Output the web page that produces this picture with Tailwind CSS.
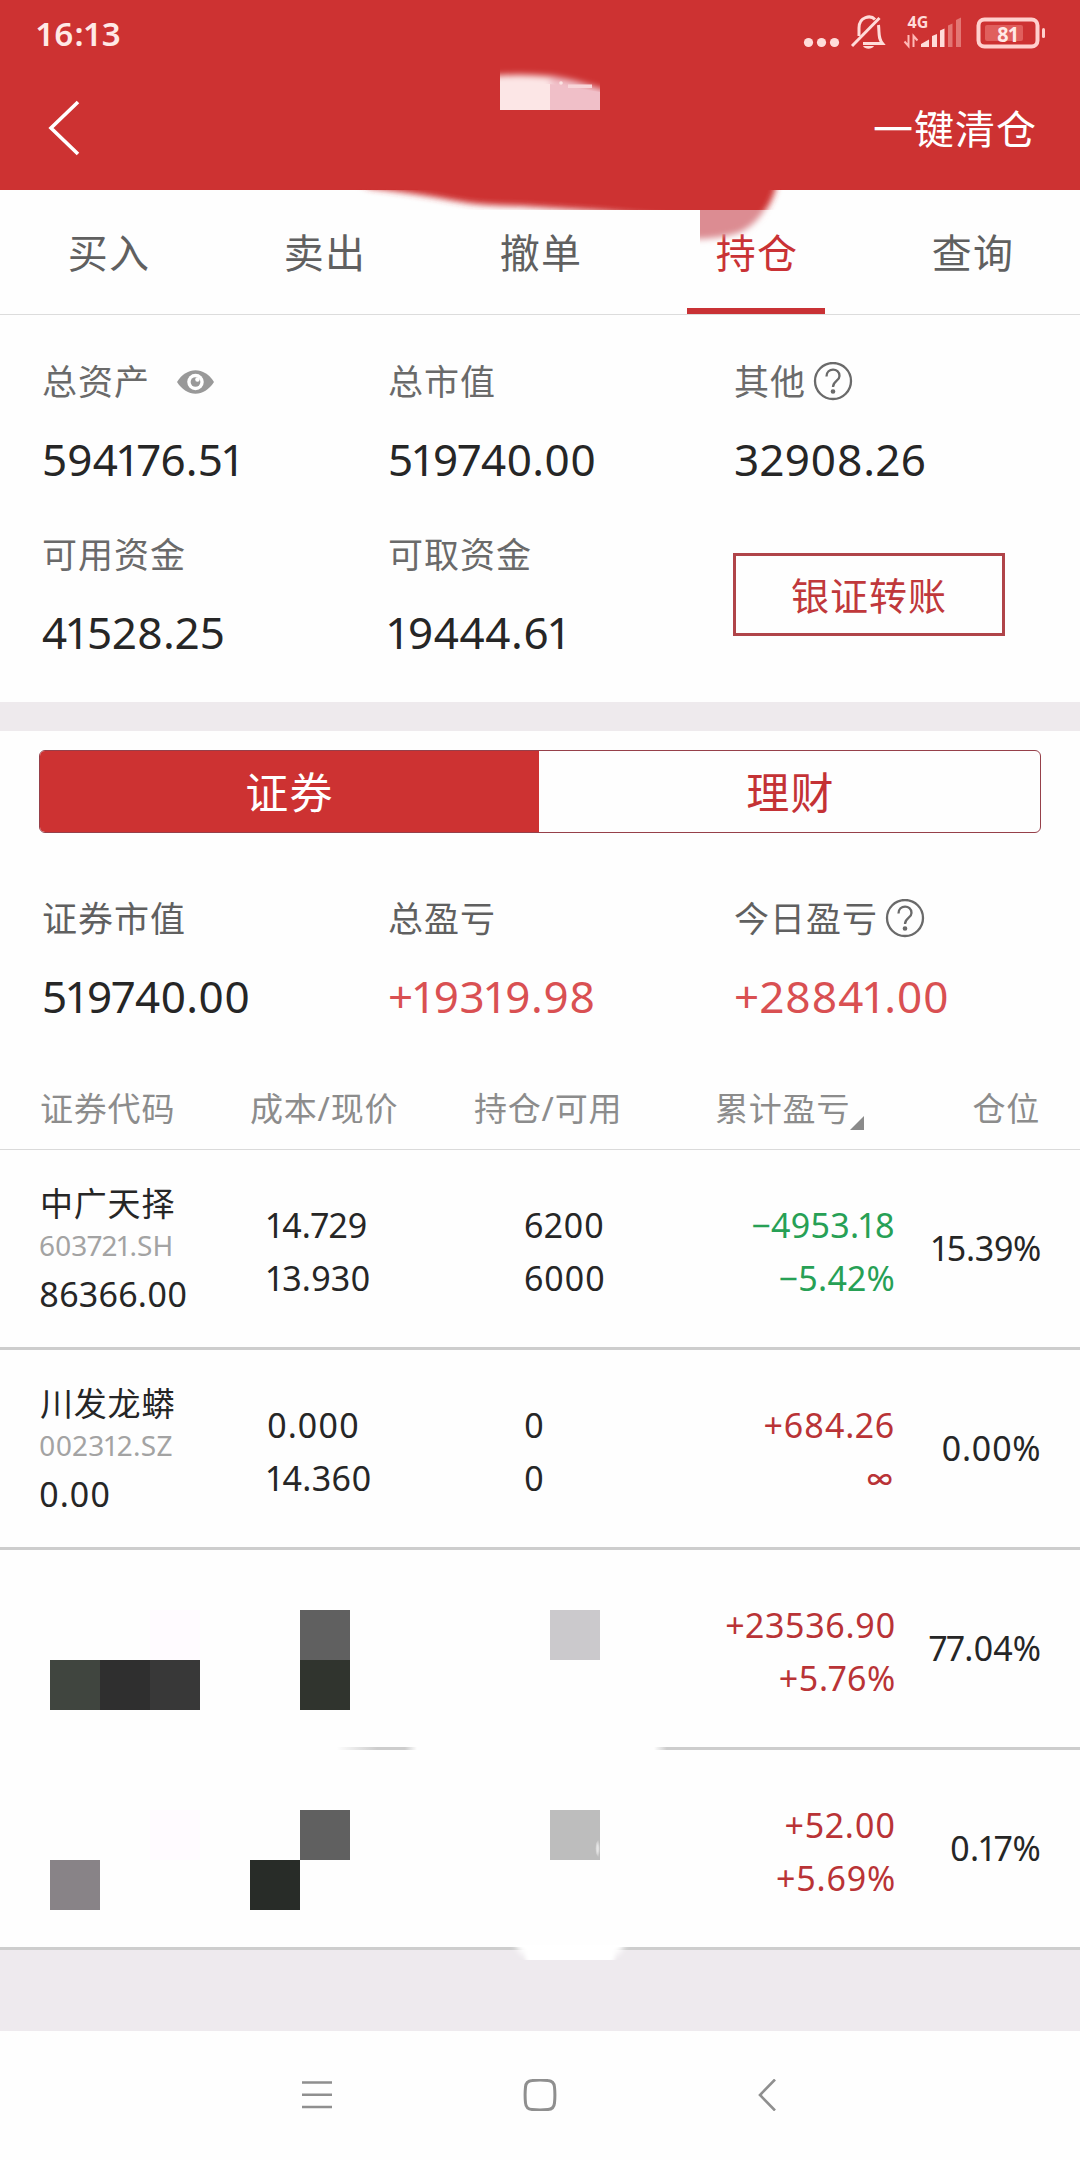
<!DOCTYPE html>
<html lang="zh-CN">
<head>
<meta charset="utf-8">
<title>持仓</title>
<script src="https://cdn.jsdelivr.net/npm/@tailwindcss/browser@4"></script>
</head>
<body class="bg-[#fefefe]">
<div class="relative flex h-[2160px] w-[1080px] flex-col overflow-hidden bg-[#fefefe] font-['Noto_Sans','Noto_Sans_CJK_SC',sans-serif] text-[#262626] proportional-nums">

  <!-- status bar and title bar -->
  <header class="h-[190px] shrink-0 bg-[#cd3232] text-white">
    <div class="flex h-[66px] items-center justify-between pr-[34px] pl-[37px]">
      <div class="pt-px text-[33px] leading-[66px] font-semibold tracking-[1px] text-[#ffe9e6]">16:13</div>
      <svg class="h-[66px] w-[246px]" viewBox="800 0 246 66" fill="none">
        <g fill="#ffdcd9"><circle cx="808.500" cy="42.500" r="4.600"/><circle cx="821.500" cy="42.500" r="4.600"/><circle cx="834.500" cy="42.500" r="4.600"/></g>
        <g stroke="#ffdcd9" stroke-width="3">
          <path d="M852 46 L879.500 18"/>
          <path d="M859 36V28C859 16 871 15 875 19.500"/>
          <path d="M878.500 25C879.500 34 878 38 882.500 43.500H863"/>
        </g>
        <path d="M863 46H874C872 49.500 865 49.500 863 46Z" fill="#ffdcd9"/>
        <text x="907.500" y="28" font-size="16" font-weight="700" fill="#ffdcd9" font-family="Noto Sans">4G</text>
        <g stroke="#ffb9b6" stroke-width="2"><path d="M908.500 35V46L904.500 41.500M913.500 47V36L917.500 40.500"/></g>
        <path d="M921 47V44L929 39.500V47Z M932 47V36L937 34V47Z M940 47V30.500L944.500 28.500V47Z" fill="#ffdcd9"/>
        <path d="M948 47V25.500L952.500 23.500V47Z M956 47V20L961 17.500V47Z" fill="#e37673"/>
        <rect x="978.500" y="19.500" width="59" height="27" rx="6" stroke="#ffd0cd" stroke-width="4"/>
        <rect x="1042" y="28" width="3" height="10" rx="1.500" fill="#ffd0cd"/>
        <rect x="985" y="25" width="38" height="16" rx="2" fill="#e05f5d"/>
        <text x="1008" y="41.500" text-anchor="middle" font-size="22" font-weight="700" textLength="22" lengthAdjust="spacingAndGlyphs" fill="#ffe9e6" font-family="Noto Sans">81</text>
      </svg>
    </div>
    <div class="flex h-[124px] items-center justify-between pr-[43px] pl-[47px]">
      <svg class="h-[56px] w-[34px]" viewBox="0 0 34 56" fill="none" stroke="#fff" stroke-width="3.600"><path d="M31 2 L4 28 L31 54"/></svg>
      <div class="pt-[2px] text-[40px] leading-[60px] tracking-[1px]">一键清仓</div>
    </div>
  </header>

  <!-- tabs -->
  <nav class="grid h-[125px] shrink-0 grid-cols-5 border-b border-[#dcdcdc] text-center text-[40px] leading-[126px] tracking-[1.2px] text-[#606060]">
    <div class="pl-[2px]">买入</div>
    <div class="pl-[2px]">卖出</div>
    <div class="pl-[2px]">撤单</div>
    <div class="flex flex-col items-center text-[#c93235]"><span class="h-[118px] pl-[2px]">持仓</span><span class="h-[6px] w-[138px] bg-[#c93235]"></span></div>
    <div class="pl-[2px]">查询</div>
  </nav>

  <!-- account summary -->
  <section class="grid shrink-0 grid-cols-[346px_346px_1fr] gap-y-[44px] pt-[43px] pb-[42px] pl-[42px]">
    <div>
      <div class="flex h-12 items-center text-[35px] leading-[48px] tracking-[1px] text-[#6a6a6a]">总资产
        <svg class="ml-[27px] h-[24px] w-[37px]" viewBox="0 0 38 24"><path d="M0 12C10-4 28-4 38 12C28 28 10 28 0 12Z" fill="#999"/><circle cx="19" cy="12" r="8.500" fill="#fff"/><circle cx="19" cy="12" r="5" fill="#999"/><circle cx="21" cy="9.500" r="2.300" fill="#fff"/></svg>
      </div>
      <div class="mt-[25px] h-14 text-[44px] leading-[56px] tracking-[0.2px]">594176.51</div>
    </div>
    <div>
      <div class="h-12 text-[35px] leading-[48px] tracking-[1px] text-[#6a6a6a]">总市值</div>
      <div class="mt-[25px] h-14 text-[44px] leading-[56px] tracking-[0.2px]">519740.00</div>
    </div>
    <div>
      <div class="flex h-12 items-center text-[35px] leading-[48px] tracking-[1px] text-[#6a6a6a]">其他
        <svg class="ml-[7px] h-[40px] w-[40px]" viewBox="0 0 40 40" fill="none" stroke="#6a6a6a" stroke-width="2.300"><circle cx="20" cy="19" r="18"/><path d="M13.500 14.500C13.500 5.500 26.500 5.500 26.500 14C26.500 19 20 19 20 25"/><circle cx="20" cy="29.500" r="1.200" fill="#6a6a6a"/></svg>
      </div>
      <div class="mt-[25px] h-14 text-[44px] leading-[56px] tracking-[0.6px]">32908.26</div>
    </div>
    <div>
      <div class="h-12 text-[35px] leading-[48px] tracking-[1px] text-[#6a6a6a]">可用资金</div>
      <div class="mt-[25px] h-14 text-[44px] leading-[56px] tracking-[0.2px]">41528.25</div>
    </div>
    <div>
      <div class="h-12 text-[35px] leading-[48px] tracking-[1px] text-[#6a6a6a]">可取资金</div>
      <div class="mt-[25px] h-14 text-[44px] leading-[56px] tracking-[0.6px]">19444.61</div>
    </div>
    <div class="mt-[22px] ml-[-1px] h-[83px] w-[272px] border-[3px] border-[#b04449] text-center text-[38px] leading-[78px] tracking-[1px] text-[#c0383b]">银证转账</div>
  </section>

  <div class="h-[29px] shrink-0 bg-[#eeeaed]"></div>

  <!-- segmented control -->
  <div class="mx-[39px] mt-[19px] flex h-[83px] shrink-0 overflow-hidden rounded-[6px] border border-[#96404a] text-center text-[43px] leading-[83px] tracking-[1.2px]">
    <div class="flex-1 bg-[#cd3232] text-white">证券</div>
    <div class="flex-1 pl-[2px] text-[#c43235]">理财</div>
  </div>

  <!-- securities summary -->
  <section class="mt-[62px] grid h-[129px] shrink-0 grid-cols-[346px_346px_1fr] pl-[42px]">
    <div>
      <div class="h-12 text-[35px] leading-[48px] tracking-[1px] text-[#606060]">证券市值</div>
      <div class="mt-[25px] h-14 text-[44px] leading-[56px] tracking-[0.2px]">519740.00</div>
    </div>
    <div>
      <div class="h-12 text-[35px] leading-[48px] tracking-[1px] text-[#606060]">总盈亏</div>
      <div class="mt-[25px] h-14 text-[44px] leading-[56px] tracking-[0.6px] text-[#d95052]">+19319.98</div>
    </div>
    <div>
      <div class="flex h-12 items-center text-[35px] leading-[48px] tracking-[1px] text-[#606060]">今日盈亏
        <svg class="ml-[7px] h-[40px] w-[40px]" viewBox="0 0 40 40" fill="none" stroke="#6a6a6a" stroke-width="2.300"><circle cx="20" cy="19" r="18"/><path d="M13.500 14.500C13.500 5.500 26.500 5.500 26.500 14C26.500 19 20 19 20 25"/><circle cx="20" cy="29.500" r="1.200" fill="#6a6a6a"/></svg>
      </div>
      <div class="mt-[25px] h-14 text-[44px] leading-[56px] tracking-[0.7px] text-[#d95052]">+28841.00</div>
    </div>
  </section>

  <!-- holdings table -->
  <div class="mt-[42px] grid h-[84px] shrink-0 grid-cols-[210px_224px_241px_1fr_auto] border-b border-[#dadada] pr-[40px] pl-[40px] text-[33px] leading-[85px] tracking-[0.8px] text-[#8c8c8c]">
    <div>证券代码</div>
    <div>成本/现价</div>
    <div>持仓/可用</div>
    <div class="flex">累计盈亏<svg class="mt-[50px] h-[14px] w-[14px]" viewBox="0 0 14 14"><path d="M14 0V14H0Z" fill="#8a8a8a"/></svg></div>
    <div>仓位</div>
  </div>

  <div class="grid h-[200px] shrink-0 grid-cols-[228px_257px_169px_202px_1fr] border-b-[3px] border-[#cdcdcd] pr-[39px] pl-[39px] text-[34px]">
    <div class="pt-[34px]">
      <div class="h-10 pl-px text-[33px] leading-10 tracking-[0.8px]">中广天择</div>
      <div class="mt-[3px] h-9 text-[28px] leading-9 text-[#a3a3a3]">603721.SH</div>
      <div class="mt-[11px] leading-10 tracking-[0.2px]">86366.00</div>
    </div>
    <div class="pt-[49px] leading-[53px] tracking-[0.2px]"><div>14.729</div><div>13.930</div></div>
    <div class="pt-[49px] leading-[53px] tracking-[0.6px]"><div>6200</div><div>6000</div></div>
    <div class="pt-[49px] text-right leading-[53px] tracking-[0.3px] text-[#27a055]"><div>−4953.18</div><div>−5.42%</div></div>
    <div class="pt-[72px] text-right leading-[53px]"><div class="tracking-[-0.3px]">15.39%</div></div>
  </div>

  <div class="grid h-[200px] shrink-0 grid-cols-[228px_257px_169px_202px_1fr] border-b-[3px] border-[#cdcdcd] pr-[39px] pl-[39px] text-[34px]">
    <div class="pt-[34px]">
      <div class="h-10 pl-px text-[33px] leading-10 tracking-[0.8px]">川发龙蟒</div>
      <div class="mt-[3px] h-9 text-[28px] leading-9 tracking-[0.3px] text-[#a3a3a3]">002312.SZ</div>
      <div class="mt-[11px] leading-10 tracking-[0.8px]">0.00</div>
    </div>
    <div class="pt-[49px] leading-[53px] tracking-[0.4px]"><div class="tracking-[0.8px]">0.000</div><div>14.360</div></div>
    <div class="pt-[49px] leading-[53px]"><div>0</div><div>0</div></div>
    <div class="pt-[49px] text-right leading-[53px] tracking-[0.8px] text-[#b93336]"><div>+684.26</div><div class="pr-[2px] text-[25px] leading-[54px] font-semibold">∞</div></div>
    <div class="pt-[72px] text-right leading-[53px] tracking-[0.5px]">0.00%</div>
  </div>

  <div class="relative grid h-[200px] shrink-0 grid-cols-[654px_202px_1fr] pr-[39px] pl-[40px] text-[34px]">
    <svg class="absolute top-0 left-0 h-[200px] w-[1080px]" viewBox="0 0 1080 200">
      <defs>
        <linearGradient id="fa"><stop offset="0" stop-color="#cdcdcd" stop-opacity="0"/><stop offset=".5" stop-color="#cdcdcd"/><stop offset=".85" stop-color="#cdcdcd"/><stop offset="1" stop-color="#cdcdcd" stop-opacity="0"/></linearGradient>
        <linearGradient id="fb"><stop offset="0" stop-color="#cdcdcd" stop-opacity="0"/><stop offset=".03" stop-color="#cdcdcd"/></linearGradient>
      </defs>
      <rect x="150" y="60" width="50" height="50" fill="#fffbff"/>
      <rect x="50" y="110" width="50" height="50" fill="#40453f"/>
      <rect x="100" y="110" width="50" height="50" fill="#2f2f2f"/>
      <rect x="150" y="110" width="50" height="50" fill="#383838"/>
      <rect x="300" y="60" width="50" height="50" fill="#606060"/>
      <rect x="300" y="110" width="50" height="50" fill="#30342e"/>
      <rect x="550" y="60" width="50" height="50" fill="#cbc9cc"/>
      <rect x="337" y="197" width="80" height="3" fill="url(#fa)"/>
      <rect x="654" y="197" width="426" height="3" fill="url(#fb)"/>
    </svg>
    <div></div>
    <div class="pt-[49px] text-right leading-[53px] tracking-[0.7px] text-[#b93336]"><div>+23536.90</div><div>+5.76%</div></div>
    <div class="pt-[72px] text-right leading-[53px]">77.04%</div>
  </div>

  <div class="relative grid h-[200px] shrink-0 grid-cols-[654px_202px_1fr] border-b-[3px] border-[#cdcdcd] pr-[39px] pl-[40px] text-[34px]">
    <svg class="absolute top-0 left-0 h-[200px] w-[620px]" viewBox="0 0 620 200">
      <defs><radialGradient id="nk"><stop offset=".3" stop-color="#e6e6e6"/><stop offset="1" stop-color="#bdbdbd"/></radialGradient></defs>
      <rect x="150" y="60" width="50" height="50" fill="#fffbff"/>
      <rect x="50" y="110" width="50" height="50" fill="#888387"/>
      <rect x="300" y="60" width="50" height="50" fill="#606060"/>
      <rect x="250" y="110" width="50" height="50" fill="#282c28"/>
      <rect x="550" y="60" width="50" height="50" fill="#bdbdbd"/>
      <path d="M600 89A7 10 0 0 0 600 108Z" fill="url(#nk)"/>
    </svg>
    <div></div>
    <div class="pt-[49px] text-right leading-[53px] tracking-[0.8px] text-[#b93336]"><div>+52.00</div><div>+5.69%</div></div>
    <div class="pt-[72px] text-right leading-[53px] tracking-[0.3px]">0.17%</div>
  </div>

  <div class="relative h-[81px] shrink-0 bg-[#eeeaee]">
    <div class="absolute -top-[5px] left-[500px] h-[15px] w-[140px] overflow-hidden"><div class="mx-[14px] -mt-[20px] h-[34px] rounded-b-[22px] bg-white blur-[3px]"></div><div class="absolute top-[6px] left-[26px] h-[12px] w-[88px] bg-white blur-[2px]"></div></div>
  </div>

  <!-- system navigation -->
  <footer class="flex flex-1 justify-center pt-[48px]">
    <svg class="h-[32px] w-[480px]" viewBox="300 2079 480 32" fill="none" stroke="#8f8f8f" stroke-width="2.600">
      <path d="M302 2082.500H332M302 2094.700H332M302 2107H332"/>
      <path d="M532 2080.500Q540 2079.500 548 2080.500Q554 2081 554.500 2087Q555.300 2095 554.500 2103Q554 2109 548 2109.500Q540 2110.500 532 2109.500Q526 2109 525.500 2103Q524.700 2095 525.500 2087Q526 2081 532 2080.500Z" stroke-width="3"/>
      <path d="M775 2079.500L760 2095L775 2110.500"/>
    </svg>
  </footer>

  <!-- brush marks over the title bar -->
  <svg class="absolute top-[60px] left-[340px] h-[200px] w-[460px]" viewBox="340 60 460 200">
    <defs>
      <filter id="b3" x="-20%" y="-60%" width="140%" height="220%"><feGaussianBlur stdDeviation="3"/></filter>
      <clipPath id="c1"><rect x="340" y="189" width="460" height="21"/></clipPath>
      <clipPath id="c2"><rect x="700" y="210" width="80" height="50"/></clipPath>
      <clipPath id="c3"><rect x="500" y="60" width="100" height="50"/></clipPath>
    </defs>
    <g clip-path="url(#c1)"><path d="M330 170L370 188Q420 194 450 200T520 206L600 211L700 220H758Q770 208 776 188V170Z" fill="#cd3232" filter="url(#b3)"/></g>
    <g clip-path="url(#c2)"><path d="M680 190H772Q764 222 738 233Q715 240 680 239Z" fill="#dc8c92" filter="url(#b3)"/></g>
    <g clip-path="url(#c3)"><g filter="url(#b3)"><path d="M490 76Q540 72 575 81L612 92V130H490Z" fill="#fce6e6"/><path d="M550 76L575 81L612 92V130H550Z" fill="#f0bfc8"/></g><path d="M550 84L600 92V110H550Z" fill="#f0bfc8"/><path d="M500 84H550V110H500Z" fill="#fce6e6"/><path d="M568 84.500H592V88H568Z" fill="#f8d6da"/><circle cx="561" cy="83" r="1.800" fill="#fbe4e4"/></g>
  </svg>
</div>
</body>
</html>
